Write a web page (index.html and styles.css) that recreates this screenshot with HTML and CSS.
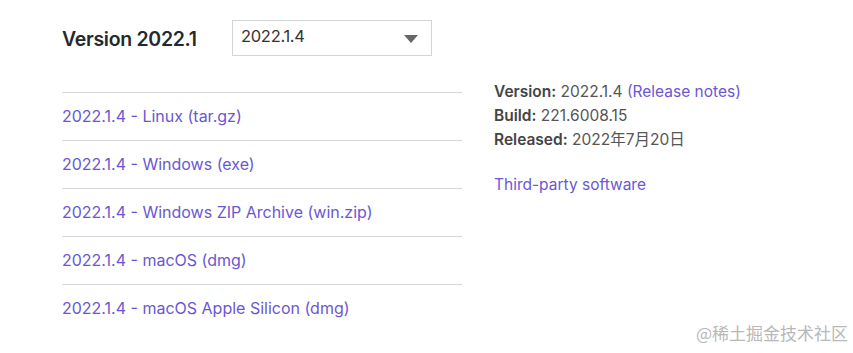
FILE: index.html
```html
<!DOCTYPE html>
<html lang="en">

<head>
    <meta charset="UTF-8">
    <meta name="viewport" content="width=device-width, initial-scale=1.0">
    <title>Other versions</title>
    <link rel="stylesheet" href="styles.css">
</head>

<body>
    <div class="page">
        <div class="header">
            <h2>Version 2022.1</h2>
            <div class="select">
                <span>2022.1.4</span>
                <svg class="arrow" width="14" height="8" viewBox="0 0 14 8"><path d="M0 0h14L7 8z" fill="#666"/></svg>
            </div>
        </div>

        <div class="content">
            <ul class="downloads">
                <li><a href="#">2022.1.4 - Linux (tar.gz)</a></li>
                <li><a href="#">2022.1.4 - Windows (exe)</a></li>
                <li><a href="#">2022.1.4 - Windows ZIP Archive (win.zip)</a></li>
                <li><a href="#">2022.1.4 - macOS (dmg)</a></li>
                <li><a href="#">2022.1.4 - macOS Apple Silicon (dmg)</a></li>
            </ul>

            <div class="info">
                <p><b>Version:</b> 2022.1.4 <a href="#">(Release notes)</a></p>
                <p><b>Build:</b> 221.6008.15</p>
                <p><b>Released:</b> 2022年7月20日</p>
                <p class="third"><a href="#">Third-party software</a></p>
            </div>
        </div>
    </div>

    <div class="watermark">@稀土掘金技术社区</div>
</body>

</html>
```

FILE: styles.css
```css
* {
    margin: 0;
    padding: 0;
    box-sizing: border-box;
}

body {
    font-family: Inter, "Noto Sans CJK SC", sans-serif;
    background: #fff;
    color: #27282c;
    width: 853px;
    height: 353px;
    overflow: hidden;
}

a {
    color: #6b57d2;
    text-decoration: none;
}

.page {
    padding: 20px 0 0 62px;
}

.header {
    display: flex;
    align-items: flex-start;
}

h2 {
    font-size: 19.5px;
    font-weight: 600;
    width: 170px;
    margin-top: 7px;
    letter-spacing: -0.3px;
}

.select {
    width: 200px;
    height: 36px;
    border: 1px solid #d4d4d4;
    display: flex;
    justify-content: space-between;
    align-items: center;
    padding: 0 13px 0 8px;
    font-size: 16.5px;
    color: #333;
}

.select span {
    margin-top: -4px;
    letter-spacing: -0.3px;
}

.arrow {
    margin-top: 2px;
}

.content {
    display: flex;
    margin-top: 36px;
}

.downloads {
    list-style: none;
    width: 400px;
}

.downloads li {
    border-top: 1px solid #d6d6d6;
    height: 48px;
    display: flex;
    align-items: center;
    padding-bottom: 2px;
    font-size: 16px;
}

.info {
    margin-left: 32px;
    margin-top: -12px;
    font-size: 15.5px;
    line-height: 24px;
    color: #555;
}

.info b {
    color: #444;
    font-weight: 600;
}

.third {
    margin-top: 21px;
}

.watermark {
    position: absolute;
    right: 5px;
    bottom: 8px;
    font-size: 17px;
    color: #b8b8b8;
    font-family: "Noto Sans CJK SC", sans-serif;
}
```
